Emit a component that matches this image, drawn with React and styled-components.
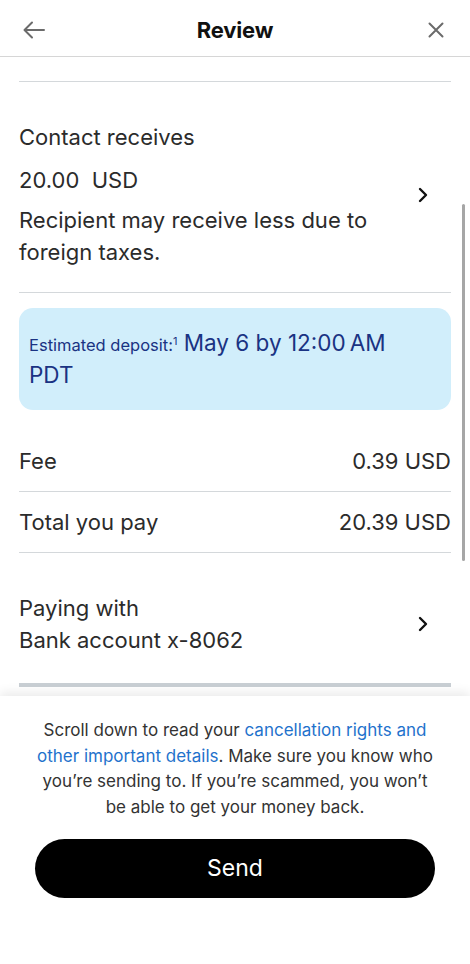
import React from "react";
import styled, { createGlobalStyle } from "styled-components";

const GlobalStyle = createGlobalStyle`
  html, body {
    margin: 0;
    padding: 0;
    background: #ffffff;
  }
  body {
    font-family: Inter, "Liberation Sans", sans-serif;
    -webkit-font-smoothing: antialiased;
  }
`;

const BackIcon = () => (
  <svg width="24" height="20" viewBox="0 0 24 20" fill="none">
    <path
      d="M22 10H3M10 2.5L2.5 10L10 17.5"
      stroke="#6b6b6b"
      strokeWidth="2"
      strokeLinecap="round"
      strokeLinejoin="round"
    />
  </svg>
);

const CloseIcon = () => (
  <svg width="18" height="18" viewBox="0 0 18 18" fill="none">
    <path
      d="M2.5 2.5L15.5 15.5M15.5 2.5L2.5 15.5"
      stroke="#6b6b6b"
      strokeWidth="2"
      strokeLinecap="round"
    />
  </svg>
);

const Chevron = () => (
  <svg width="12" height="18" viewBox="0 0 12 18" fill="none">
    <path
      d="M3 3L9 9L3 15"
      stroke="#111"
      strokeWidth="2.4"
      strokeLinecap="round"
      strokeLinejoin="round"
    />
  </svg>
);

export default function App() {
  return (
    <>
      <GlobalStyle />
      <Screen>
        <Header>
          <IconButton>
            <BackIcon />
          </IconButton>
          <Title>Review</Title>
          <IconButton>
            <CloseIcon />
          </IconButton>
        </Header>

        <Content>
          <TopStub />

          <LinkSection>
            <Lines>
              <Line>Contact receives</Line>
              <Amount>20.00&nbsp;&nbsp;USD</Amount>
              <Line>
                Recipient may receive less due to
                <br />
                foreign taxes.
              </Line>
            </Lines>
            <Chevron />
          </LinkSection>

          <DepositBox>
            <DepositLabel>
              Estimated deposit:<sup>1</sup>
            </DepositLabel>{" "}
            May 6 by 12:00&#8239;AM PDT
          </DepositBox>

          <Row $first>
            <span>Fee</span>
            <span>0.39 USD</span>
          </Row>
          <Row>
            <span>Total you pay</span>
            <span>20.39 USD</span>
          </Row>

          <LinkSection $thick>
            <Lines>
              <Line>Paying with</Line>
              <Line>Bank account x-8062</Line>
            </Lines>
            <Chevron />
          </LinkSection>

          <Scrollbar />
        </Content>

        <Footer>
          <Notice>
            Scroll down to read your{" "}
            <NoticeLink>cancellation rights and other important details</NoticeLink>
            . Make sure you know who you’re sending to. If you’re scammed, you
            won’t be able to get your money back.
          </Notice>
          <SendButton>Send</SendButton>
        </Footer>
      </Screen>
    </>
  );
}

const Screen = styled.div`
  width: 470px;
  height: 964px;
  display: flex;
  flex-direction: column;
  background: #fff;
  overflow: hidden;
`;

const Header = styled.header`
  height: 57px;
  flex-shrink: 0;
  display: flex;
  align-items: center;
  justify-content: space-between;
  padding: 3px 20px 0 20px;
  box-sizing: border-box;
  border-bottom: 1px solid #d6d6d6;
`;

const IconButton = styled.div`
  width: 28px;
  height: 28px;
  display: flex;
  align-items: center;
  justify-content: center;
`;

const Title = styled.h1`
  margin: 0;
  font-size: 22px;
  font-weight: 700;
  color: #111;
  letter-spacing: -0.2px;
`;

const Content = styled.main`
  position: relative;
  flex: 1;
  padding: 0 19px;
  overflow: hidden;
`;

const TopStub = styled.div`
  height: 24px;
  border-bottom: 1px solid #d4d8db;
`;

const LinkSection = styled.section`
  display: flex;
  align-items: center;
  justify-content: space-between;
  padding: ${(p) => (p.$thick ? "39px 22px 27px 0" : "39px 22px 24px 0")};
  border-bottom: ${(p) => (p.$thick ? "4px solid #c9cfd4" : "1px solid #d4d8db")};
`;

const Lines = styled.div`
  display: flex;
  flex-direction: column;
`;

const Line = styled.div`
  font-size: 22px;
  line-height: 32px;
  color: #2b2b2b;
`;

const Amount = styled(Line)`
  margin: 11px 0 8px;
`;

const DepositBox = styled.div`
  margin-top: 15px;
  background: #d1eefb;
  border-radius: 14px;
  padding: 20px 56px 20px 10px;
  font-size: 22.5px;
  line-height: 30px;
  color: #1a3383;
`;

const DepositLabel = styled.span`
  font-size: 16.5px;

  sup {
    font-size: 11px;
    vertical-align: 6px;
    line-height: 0;
  }
`;

const Row = styled.div`
  height: 60px;
  margin-top: ${(p) => (p.$first ? "21px" : "0")};
  display: flex;
  align-items: center;
  justify-content: space-between;
  font-size: 22px;
  color: #2b2b2b;
  border-bottom: 1px solid #d4d8db;
`;

const Scrollbar = styled.div`
  position: absolute;
  top: 147px;
  right: 5px;
  width: 3px;
  height: 357px;
  border-radius: 2px;
  background: #a6a6a6;
`;

const Footer = styled.footer`
  flex-shrink: 0;
  height: 268px;
  box-sizing: border-box;
  padding: 22px 34px 0;
  background: #fff;
  box-shadow: 0 -4px 10px rgba(0, 0, 0, 0.08);
  display: flex;
  flex-direction: column;
  align-items: center;
  z-index: 1;
`;

const Notice = styled.p`
  margin: 0;
  font-size: 17px;
  line-height: 25.7px;
  text-align: center;
  color: #333;
`;

const NoticeLink = styled.span`
  color: #1f72cc;
`;

const SendButton = styled.button`
  margin-top: 18px;
  width: 400px;
  height: 59px;
  flex-shrink: 0;
  border: none;
  border-radius: 30px;
  background: #000;
  color: #fff;
  font-family: Inter, "Liberation Sans", sans-serif;
  font-size: 23px;
  font-weight: 400;
`;
